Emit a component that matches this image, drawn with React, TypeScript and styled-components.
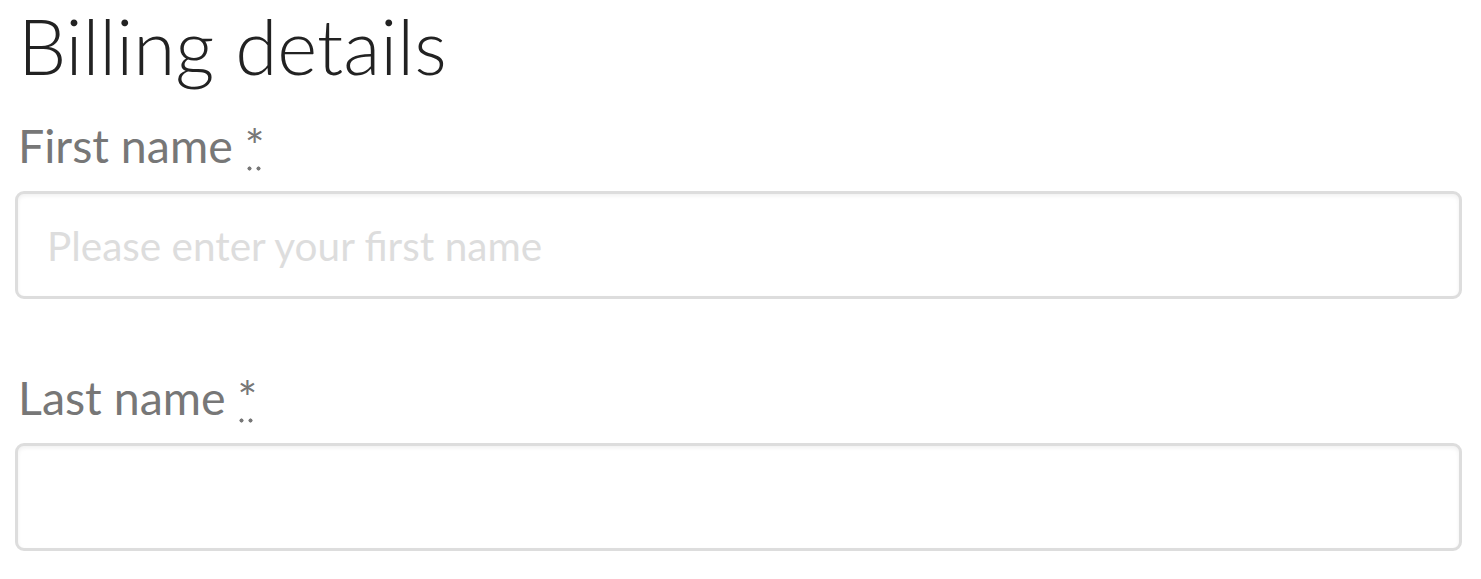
import * as React from 'react'
import styled, { createGlobalStyle } from 'styled-components'

const GlobalStyle = createGlobalStyle`
  body {
    margin: 0;
    background: #fff;
    font-family: Lato, 'Open Sans', sans-serif;
  }
`

const Form = styled.form`
  padding: 0 19px 0 15px;
`

const Heading = styled.h3`
  margin: 0 0 0 3px;
  font-size: 76.5px;
  font-weight: 300;
  line-height: 90px;
  color: #222;
`

const Field = styled.div`
  display: flex;
  flex-direction: column;
  margin-top: ${props => props.$first ? '27px' : '70px'};
`

const Label = styled.label`
  font-size: 46.5px;
  line-height: 56px;
  color: #777;
  margin: 0 0 18px 3px;
`

// dotted underline drawn as two round dots under the asterisk
const Required = styled.abbr`
  color: #777;
  text-decoration: none;
  cursor: help;
  background-image: radial-gradient(circle, #777 1.8px, transparent 2.3px);
  background-size: 9px 5px;
  background-repeat: repeat-x;
  background-position: 0 calc(100% - 2px);
`

const Input = styled.input`
  box-sizing: border-box;
  width: 100%;
  height: 108px;
  border: 3px solid #ddd;
  border-radius: 9px;
  padding: 0 29px;
  font-family: Lato, sans-serif;
  font-size: 40.5px;
  color: #333;
  box-shadow: inset 0 2px 4px rgba(0, 0, 0, 0.06);
  outline: none;
  &::placeholder {
    color: #ddd;
  }
`

const App = () => (
  <Form>
    <GlobalStyle />
    <Heading>Billing details</Heading>
    <Field $first>
      <Label>
        First name <Required title="required">*</Required>
      </Label>
      <Input placeholder="Please enter your first name" />
    </Field>
    <Field>
      <Label>
        Last name <Required title="required">*</Required>
      </Label>
      <Input />
    </Field>
  </Form>
)

export default App
